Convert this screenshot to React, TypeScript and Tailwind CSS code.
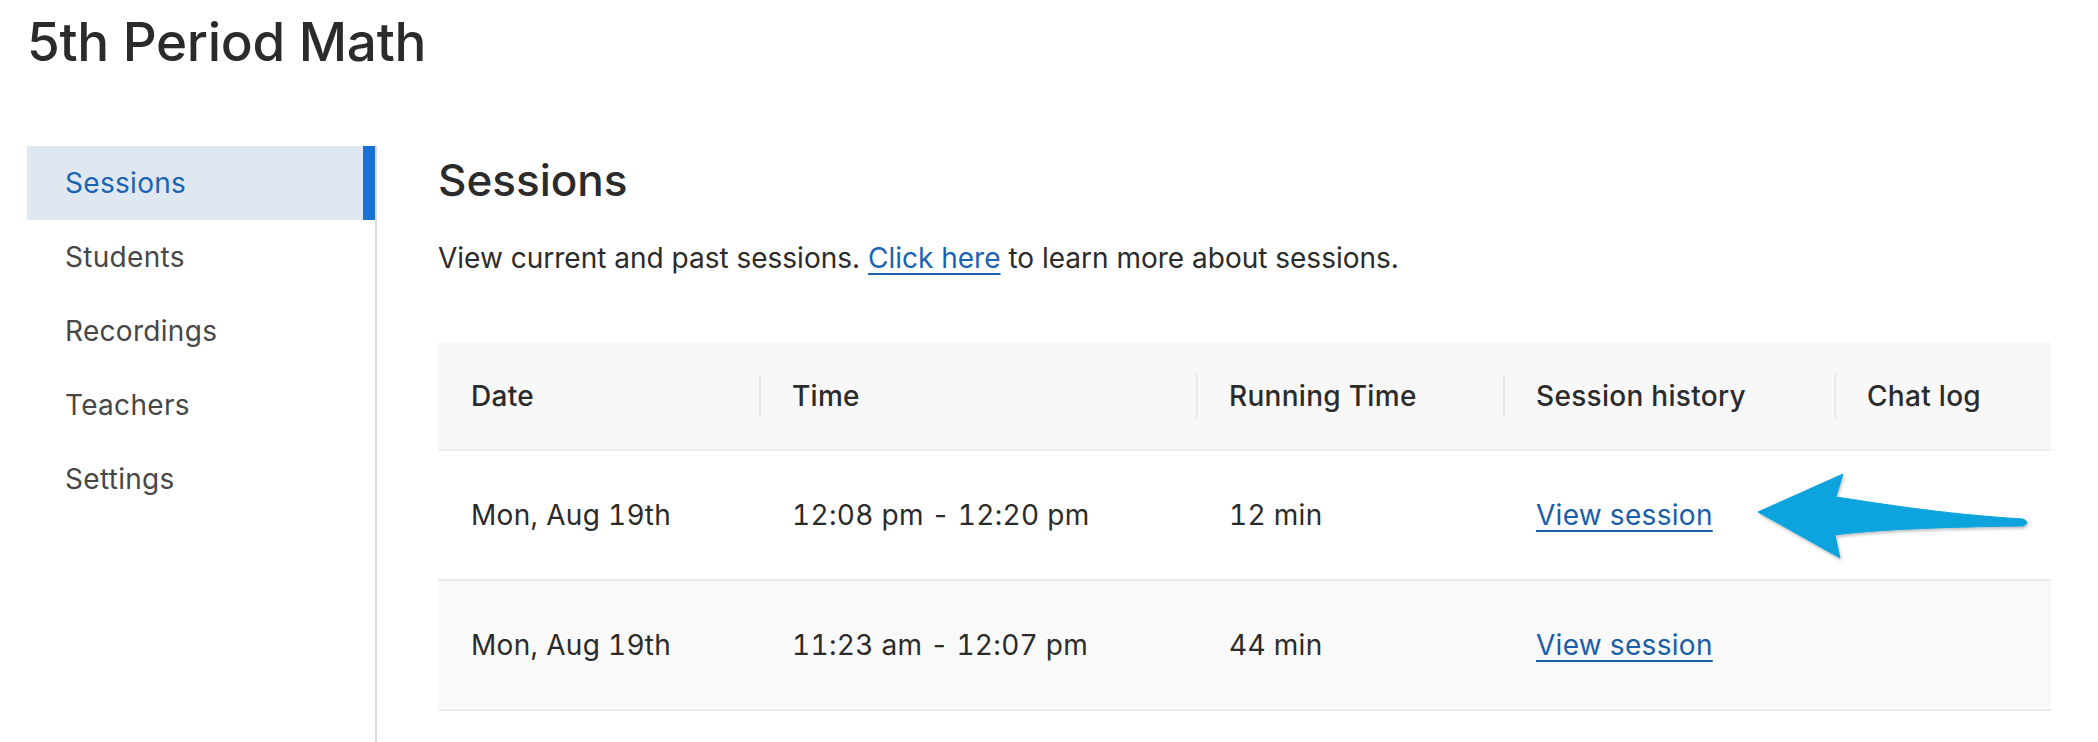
import clsx from 'clsx';

const navItems = ['Sessions', 'Students', 'Recordings', 'Teachers', 'Settings'];

const columns = ['Date', 'Time', 'Running Time', 'Session history', 'Chat log'];

const sessions = [
	{ date: 'Mon, Aug 19th', time: '12:08 pm - 12:20 pm', running: '12 min' },
	{ date: 'Mon, Aug 19th', time: '11:23 am - 12:07 pm', running: '44 min' },
];

const gridCols = 'grid grid-cols-[321px_437px_307px_331px_217px]';

const PointerArrow = () => (
	<svg
		width="300"
		height="120"
		viewBox="0 0 300 120"
		className="pointer-events-none absolute left-[1302px] top-[9px]"
	>
		<defs>
			<filter id="arrowShadow" x="-10%" y="-20%" width="120%" height="140%">
				<feDropShadow dx="1" dy="2" stdDeviation="1.5" floodColor="#000" floodOpacity="0.25" />
			</filter>
		</defs>
		<path
			d="M18 52 L103 14 L96 37 C130 42 200 54 283 59 Q291 62.5 283 66 C200 67 130 70 95 75 L100 98 Z"
			fill="#0aa3dc"
			stroke="#0aa3dc"
			strokeWidth="1"
			strokeLinejoin="round"
			filter="url(#arrowShadow)"
		/>
	</svg>
);

const Sidebar = ({ active }: { active: string }) => (
	<nav className="w-[350px] shrink-0 border-r-2 border-[#d9d9d9]">
		{navItems.map((item) => (
			<div
				key={item}
				className={clsx(
					'flex h-[74px] items-center pl-[38px] text-[28px] tracking-[0.3px]',
					item === active
						? 'border-r-[12px] border-[#1872d2] bg-[#dfe7f1] text-[#1a64b3]'
						: 'text-[#474747]'
				)}
			>
				{item}
			</div>
		))}
	</nav>
);

const SessionsTable = () => (
	<div className="w-[1613px] text-[28px] tracking-[0.3px] text-[#2b2b2b]">
		<div className={clsx(gridCols, 'h-[109px] border-b-2 border-[#ececec] bg-[#f8f8f8] font-medium')}>
			{columns.map((col, i) => (
				<div key={col} className="flex items-center">
					{i > 0 && <span className="h-[44px] w-[2px] bg-[#e8e8e8]" />}
					<span className={i > 0 ? 'pl-[31px]' : 'pl-[33px]'}>{col}</span>
				</div>
			))}
		</div>
		{sessions.map((s, i) => (
			<div
				key={i}
				className={clsx(
					gridCols,
					'relative h-[130px] items-center border-b-2 border-[#ececec] tabular-nums',
					i % 2 === 1 ? 'bg-[#f9f9f9]' : 'bg-white'
				)}
			>
				<span className="pl-[33px]">{s.date}</span>
				<span className="pl-[33px]">{s.time}</span>
				<span className="pl-[33px]">{s.running}</span>
				<span className="pl-[33px]">
					<a href="#" className="text-[#1a5ea9] underline underline-offset-[5px] decoration-2">
						View session
					</a>
				</span>
				<span />
				{i === 0 && <PointerArrow />}
			</div>
		))}
	</div>
);

export default function App() {
	return (
		<div className="flex h-[742px] w-full flex-col overflow-hidden bg-white font-['Inter',sans-serif] text-[#2b2b2b]">
			<h1 className="pl-[27px] pt-[16px] text-[53px] font-medium leading-none tracking-[-0.3px]">
				5th Period Math
			</h1>
			<div className="mt-[77px] flex flex-1 pl-[27px]">
				<Sidebar active="Sessions" />
				<main className="pl-[61px] pt-[12px]">
					<h2 className="text-[44px] font-medium leading-none">Sessions</h2>
					<p className="mt-[35px] text-[28px]">
						View current and past sessions.{' '}
						<a href="#" className="text-[#1a64b3] underline underline-offset-[5px] decoration-2">
							Click here
						</a>{' '}
						to learn more about sessions.
					</p>
					<div className="mt-[63px]">
						<SessionsTable />
					</div>
				</main>
			</div>
		</div>
	);
}
